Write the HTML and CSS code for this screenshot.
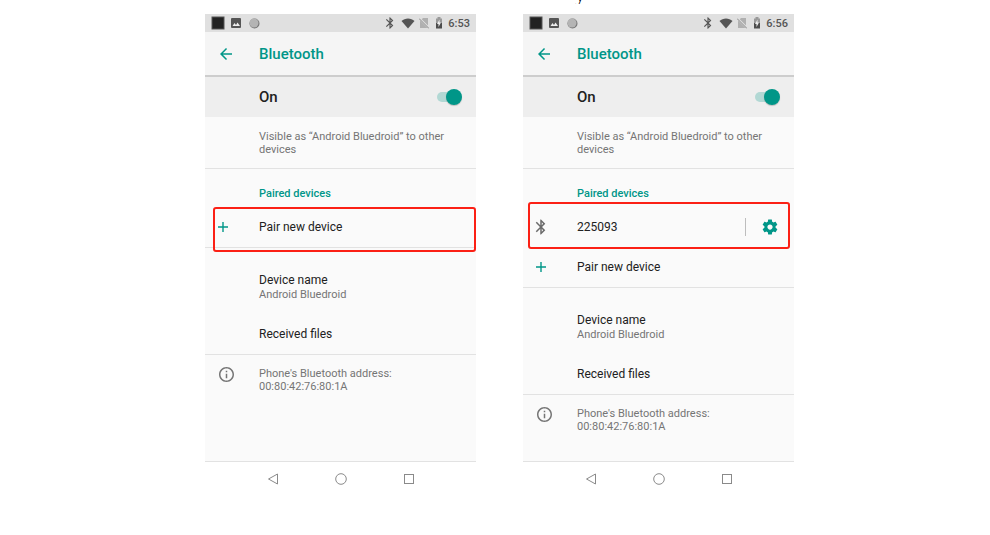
FILE: index.html
```html
<!DOCTYPE html>
<html lang="en">
<head>
    <meta charset="UTF-8">
    <meta name="viewport" content="width=device-width, initial-scale=1.0">
    <title>Bluetooth</title>
    <link rel="stylesheet" href="styles.css">
</head>
<body>
    <!-- Shared icons -->
    <svg class="sprite" aria-hidden="true">
        <symbol id="bluetooth" viewBox="0 0 24 24">
            <path d="M17.71 7.71L12 2h-1v7.59L6.41 5 5 6.41 10.59 12 5 17.59 6.41 19 11 14.41V22h1l5.71-5.71-4.3-4.29 4.3-4.29zM13 5.83l1.88 1.88L13 9.59V5.83zm1.88 10.46L13 18.17v-3.76l1.88 1.88z"/>
        </symbol>
        <symbol id="notifications" viewBox="0 0 50 14">
            <rect x="1" y="1" width="12" height="12" fill="#222" stroke="#555"/>
            <path fill="#555" d="M21 2h8a1 1 0 0 1 1 1v8a1 1 0 0 1-1 1h-8a1 1 0 0 1-1-1V3a1 1 0 0 1 1-1z"/>
            <path fill="#eee" d="M21.500 10l2-3 1.500 2 1.500-2.500 2.500 3.500z"/>
            <circle cx="43.500" cy="7.500" r="5" fill="#777"/>
            <circle cx="43" cy="7" r="4.500" fill="#b4b4b4"/>
        </symbol>
        <symbol id="wifi" viewBox="0 0 14 12">
            <path d="M.5 4C4 .5 10 .5 13.500 4L7 11.500z"/>
        </symbol>
        <symbol id="no-sim" viewBox="0 0 10 12">
            <path fill="#b0b0b0" d="M4 1h5v10H1V4z"/>
            <path fill="none" stroke="#e0e0e0" stroke-width="2" d="M0 1l10 10"/>
            <path fill="none" stroke="#888" d="M0 1.500l10 10"/>
        </symbol>
        <symbol id="battery" viewBox="0 0 8 12">
            <path fill="#999" d="M2.500 0h3v1.500H7V6H1V1.500h1.500z"/>
            <path fill="#4d4d4d" d="M1 6h6v5.500H1z"/>
            <path fill="#eee" d="M4.500 2.500L2 7h1.500v3L6 5.500H4.500z"/>
        </symbol>
        <symbol id="back" viewBox="0 0 24 24">
            <path d="M20 11H7.830l5.590-5.590L12 4l-8 8 8 8 1.410-1.410L7.830 13H20v-2z"/>
        </symbol>
        <symbol id="plus" viewBox="0 0 12 12">
            <path d="M5.300 1h1.400v4.300H11v1.400H6.700V11H5.300V6.700H1V5.300h4.300z"/>
        </symbol>
        <symbol id="info" viewBox="2 2 20 20">
            <path d="M11 7h2v2h-2zm0 4h2v6h-2zm1-9C6.480 2 2 6.480 2 12s4.480 10 10 10 10-4.480 10-10S17.520 2 12 2zm0 18c-4.410 0-8-3.590-8-8s3.590-8 8-8 8 3.590 8 8-3.590 8-8 8z"/>
        </symbol>
        <symbol id="gear" viewBox="0 0 24 24">
            <path d="M19.430 12.980c.04-.32.07-.64.07-.98s-.03-.66-.07-.98l2.110-1.650c.19-.15.24-.42.12-.64l-2-3.460c-.12-.22-.39-.3-.61-.22l-2.490 1c-.52-.4-1.080-.73-1.690-.98l-.38-2.650C14.460 2.180 14.250 2 14 2h-4c-.25 0-.46.18-.49.42l-.38 2.650c-.61.25-1.170.59-1.690.98l-2.490-1c-.23-.09-.49 0-.61.22l-2 3.460c-.13.22-.07.49.12.64l2.110 1.650c-.04.32-.07.65-.07.98s.03.66.07.98l-2.110 1.650c-.19.15-.24.42-.12.64l2 3.460c.12.22.39.3.61.22l2.490-1c.52.4 1.080.73 1.690.98l.38 2.650c.03.24.24.42.49.42h4c.25 0 .46-.18.49-.42l.38-2.650c.61-.25 1.170-.59 1.690-.98l2.490 1c.23.09.49 0 .61-.22l2-3.460c.12-.22.07-.49-.12-.64l-2.110-1.650zM12 15.500c-1.930 0-3.500-1.570-3.500-3.500s1.570-3.500 3.500-3.500 3.500 1.570 3.500 3.500-1.570 3.500-3.500 3.500z"/>
        </symbol>
        <symbol id="nav-back" viewBox="0 0 12 12">
            <path d="M10.500 1v10L1.500 6z"/>
        </symbol>
        <symbol id="nav-home" viewBox="0 0 12 12">
            <circle cx="6" cy="6" r="5.300"/>
        </symbol>
        <symbol id="nav-recent" viewBox="0 0 12 12">
            <rect x="1.500" y="1.500" width="9" height="9"/>
        </symbol>
    </svg>

    <p class="caption">y</p>

    <main class="screens">
        <section class="phone">
            <div class="status-bar">
                <svg class="notifications"><use href="#notifications"/></svg>
                <div class="status-icons">
                    <svg class="status-bt"><use href="#bluetooth"/></svg>
                    <svg class="status-wifi"><use href="#wifi"/></svg>
                    <svg class="status-sim"><use href="#no-sim"/></svg>
                    <svg class="status-battery"><use href="#battery"/></svg>
                    <span class="time">6:53</span>
                </div>
            </div>
            <header class="app-bar">
                <button class="back-btn" aria-label="Back"><svg class="icon-back"><use href="#back"/></svg></button>
                <h1>Bluetooth</h1>
            </header>
            <div class="switch-bar">
                <label for="bt-left">On</label>
                <input type="checkbox" class="switch" id="bt-left" checked>
            </div>
            <p class="summary">Visible as “Android Bluedroid” to other devices</p>
            <div class="group">
                <h2>Paired devices</h2>
                <div class="row highlight-add">
                    <button class="item"><svg class="icon-plus"><use href="#plus"/></svg>Pair new device</button>
                </div>
            </div>
            <div class="group settings">
                <button class="item two-line">Device name<small>Android Bluedroid</small></button>
                <button class="item">Received files</button>
            </div>
            <div class="address">
                <svg class="icon-info"><use href="#info"/></svg>
                <p>Phone's Bluetooth address: 00:80:42:76:80:1A</p>
            </div>
            <nav class="nav-bar">
                <button aria-label="Back"><svg><use href="#nav-back"/></svg></button>
                <button aria-label="Home"><svg><use href="#nav-home"/></svg></button>
                <button aria-label="Recent apps"><svg><use href="#nav-recent"/></svg></button>
            </nav>
        </section>

        <section class="phone">
            <div class="status-bar">
                <svg class="notifications"><use href="#notifications"/></svg>
                <div class="status-icons">
                    <svg class="status-bt"><use href="#bluetooth"/></svg>
                    <svg class="status-wifi"><use href="#wifi"/></svg>
                    <svg class="status-sim"><use href="#no-sim"/></svg>
                    <svg class="status-battery"><use href="#battery"/></svg>
                    <span class="time">6:56</span>
                </div>
            </div>
            <header class="app-bar">
                <button class="back-btn" aria-label="Back"><svg class="icon-back"><use href="#back"/></svg></button>
                <h1>Bluetooth</h1>
            </header>
            <div class="switch-bar">
                <label for="bt-right">On</label>
                <input type="checkbox" class="switch" id="bt-right" checked>
            </div>
            <p class="summary">Visible as “Android Bluedroid” to other devices</p>
            <div class="group">
                <h2>Paired devices</h2>
                <div class="row highlight-device">
                    <button class="item"><svg class="icon-device"><use href="#bluetooth"/></svg>225093</button>
                    <button class="gear-btn" aria-label="Device settings"><svg class="icon-gear"><use href="#gear"/></svg></button>
                </div>
                <div class="row">
                    <button class="item"><svg class="icon-plus"><use href="#plus"/></svg>Pair new device</button>
                </div>
            </div>
            <div class="group settings">
                <button class="item two-line">Device name<small>Android Bluedroid</small></button>
                <button class="item">Received files</button>
            </div>
            <div class="address">
                <svg class="icon-info"><use href="#info"/></svg>
                <p>Phone's Bluetooth address: 00:80:42:76:80:1A</p>
            </div>
            <nav class="nav-bar">
                <button aria-label="Back"><svg><use href="#nav-back"/></svg></button>
                <button aria-label="Home"><svg><use href="#nav-home"/></svg></button>
                <button aria-label="Recent apps"><svg><use href="#nav-recent"/></svg></button>
            </nav>
        </section>
    </main>
</body>
</html>
```
FILE: styles.css
```css
* {
    box-sizing: border-box;
}

body {
    margin: 0;
    background: #fff;
    color: #212121;
    font-family: Roboto, "Liberation Sans", sans-serif;
}

h1, h2, p {
    margin: 0;
}

button {
    padding: 0;
    border: none;
    background: none;
    color: inherit;
    font: inherit;
    cursor: pointer;
}

svg {
    display: block;
    flex: none;
    fill: currentColor;
}

.sprite {
    position: absolute;
    width: 0;
    height: 0;
}

/* last line of the paragraph above the screens */
.caption {
    display: flex;
    align-items: flex-end;
    justify-content: center;
    height: 4px;
    padding-left: 170px;
    overflow: hidden;
    color: #000;
    font-family: "Liberation Serif", serif;
    font-size: 20px;
    line-height: 20px;
}

.screens {
    display: grid;
    grid-template-columns: repeat(2, minmax(0, 271px));
    justify-content: center;
    gap: 47px;
    padding: 10px 0 39px 9px;
}

.phone {
    display: flex;
    flex-direction: column;
    min-height: 482px;
    background: #fafafa;
}

/* Status bar */
.status-bar {
    display: flex;
    justify-content: space-between;
    align-items: center;
    height: 18px;
    padding: 0 6px;
    background: #e0e0e0;
    color: #555;
}

.notifications {
    width: 50px;
    height: 14px;
}

.status-icons {
    display: flex;
    align-items: center;
    gap: 4px;
}

.status-bt {
    width: 14px;
    height: 14px;
}

.status-wifi {
    width: 14px;
    height: 12px;
}

.status-sim {
    width: 10px;
    height: 12px;
}

.status-battery {
    width: 8px;
    height: 12px;
    margin: 0 1px 0 2px;
}

.time {
    font-size: 11px;
    font-weight: 500;
}

/* App bar */
.app-bar {
    display: flex;
    align-items: center;
    height: 45px;
    border-bottom: 2px solid #cdcdcd;
    background: #f5f5f5;
    color: #009688;
}

.back-btn {
    display: flex;
    width: 54px;
    padding-left: 12px;
}

.icon-back {
    width: 18px;
    height: 18px;
}

h1 {
    font-size: 15px;
    font-weight: 500;
}

.switch-bar {
    display: flex;
    justify-content: space-between;
    align-items: center;
    height: 40px;
    padding: 0 14px 0 54px;
    background: #eee;
    font-size: 15px;
    font-weight: 500;
}

.switch {
    position: relative;
    width: 25px;
    height: 16px;
    margin: 0;
    appearance: none;
    cursor: pointer;
}

.switch::before,
.switch::after {
    content: "";
    position: absolute;
}

.switch::before {
    inset: 3px 3px 3px 0;
    border-radius: 5px;
    background: #b2d8d4;
}

.switch::after {
    top: 0;
    left: 0;
    width: 16px;
    height: 16px;
    border-radius: 50%;
    background: #009688;
    box-shadow: 0 1px 1px rgba(0, 0, 0, 0.2);
}

.switch:checked::after {
    left: 9px;
}

/* Lists */
.summary,
.address {
    color: #757575;
    font-size: 11px;
    line-height: 13px;
}

.summary {
    padding: 13px 24px 12px 54px;
    border-bottom: 1px solid #e2e2e2;
}

.group {
    border-bottom: 1px solid #e2e2e2;
}

h2 {
    padding: 18px 0 6px 54px;
    color: #009688;
    font-size: 11px;
    font-weight: 500;
    line-height: 14px;
}

.row {
    position: relative;
    display: flex;
    align-items: center;
}

.item {
    display: flex;
    align-items: center;
    width: 100%;
    height: 40px;
    padding-left: 54px;
    font-size: 12px;
    line-height: 16px;
    text-align: left;
}

.row .item {
    padding-left: 12px;
}

.icon-plus {
    width: 12px;
    height: 12px;
    margin-right: 30px;
    color: #009688;
}

.icon-device {
    width: 18px;
    height: 18px;
    margin: 0 27px 0 -3px;
    color: #6b6b6b;
}

.gear-btn {
    display: flex;
    flex: none;
    padding: 0 15px;
    border-left: 1px solid #bdbdbd;
    color: #009688;
}

.icon-gear {
    width: 18px;
    height: 18px;
}

/* Red frames round the rows to tap */
.highlight-add::after,
.highlight-device::after {
    content: "";
    position: absolute;
    border: 2px solid #fb2015;
    border-radius: 3px;
    pointer-events: none;
}

.highlight-add::after {
    inset: 0 0 -5px 8px;
}

.highlight-device::after {
    inset: -5px 4px -2px 5px;
}

.settings {
    padding-top: 12px;
}

.two-line {
    flex-direction: column;
    align-items: flex-start;
    height: auto;
    padding-top: 12px;
    padding-bottom: 12px;
}

small {
    color: #757575;
    font-size: 11px;
    line-height: 14px;
}

.address {
    display: flex;
    padding: 12px 70px 13px 14px;
}

.icon-info {
    width: 15px;
    height: 15px;
    margin-right: 25px;
}

/* Navigation bar */
.nav-bar {
    display: flex;
    justify-content: center;
    gap: 56px;
    margin-top: auto;
    padding: 11px 0;
    border-top: 1px solid #e2e2e2;
    background: #fff;
}

.nav-bar svg {
    width: 12px;
    height: 12px;
    fill: none;
    stroke: #8a8a8a;
}
```
